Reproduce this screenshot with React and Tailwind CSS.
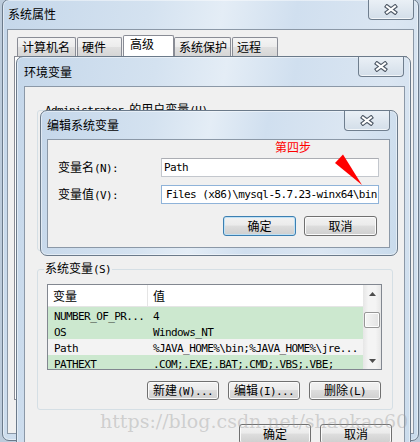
import React from 'react';

const mono = "font-['DejaVu_Sans_Mono',monospace] text-[11px] tracking-[-0.6px]";
const frameBg =
  'bg-[linear-gradient(100deg,#c5d7ea_0%,#d4e2f0_30%,#e4edf6_45%,#d0dfef_60%,#dbe6f2_80%,#c9dbec_100%)]';

function M({ children }) {
  return <span className={mono}>{children}</span>;
}

function CloseButton() {
  return (
    <div className="flex h-[20px] w-[46px] shrink-0 items-center justify-center rounded-b-[4px] border border-t-0 border-[#6f7e8e] bg-[linear-gradient(#eaf0f6,#d3dee9)] shadow-[inset_0_-1px_0_rgba(255,255,255,0.7)]">
      <svg width="14" height="11" viewBox="0 0 14 11">
        <path d="M3 2.5 L11 8.5 M11 2.5 L3 8.5" stroke="#4f5966" strokeWidth="4.2" strokeLinecap="square" />
        <path d="M3 2.5 L11 8.5 M11 2.5 L3 8.5" stroke="#ffffff" strokeWidth="2" strokeLinecap="square" />
      </svg>
    </div>
  );
}

function Win({ title, box, bar, titleTop, client, children }) {
  return (
    <div className={`absolute flex flex-col border border-[#6b7a8a] shadow-[inset_0_0_0_1px_rgba(255,255,255,0.45)] ${frameBg} ${box}`}>
      <div className={`flex shrink-0 items-start justify-between ${bar}`}>
        <span className={titleTop}>{title}</span>
        <CloseButton />
      </div>
      <div className={`shrink-0 border border-[#8b98a7] bg-[#f0f0f0] ${client}`}>{children}</div>
    </div>
  );
}

function Btn({ className = '', def, children }) {
  const edge = def
    ? 'border-[#3c7fb1] shadow-[inset_0_0_0_1px_#bfe1f5]'
    : 'border-[#707070] shadow-[inset_0_0_0_1px_#fbfbfb]';
  return (
    <div
      className={`flex shrink-0 items-center justify-center rounded-[3px] border bg-[linear-gradient(#f2f2f2_0%,#ebebeb_45%,#dddddd_50%,#cfcfcf_100%)] ${edge} ${className}`}
    >
      <span>{children}</span>
    </div>
  );
}

function Tab({ className = '', children }) {
  return (
    <div
      className={`h-[19px] rounded-t-[2px] border border-b-0 border-[#898c95] bg-[linear-gradient(#f4f4f4,#ececec_50%,#e0e0e0_50%,#d6d6d6)] pl-[4px] pt-[3px] ${className}`}
    >
      {children}
    </div>
  );
}

const rows = [
  { name: 'NUMBER_OF_PR...', value: '4' },
  { name: 'OS', value: 'Windows_NT' },
  { name: 'Path', value: '%JAVA_HOME%\\bin;%JAVA_HOME%\\jre...', sel: true },
  { name: 'PATHEXT', value: '.COM;.EXE;.BAT;.CMD;.VBS;.VBE;' },
];

function ListView() {
  return (
    <div className="ml-[3px] mt-[8px] flex h-[86px] w-[335px] border border-[#828790] bg-white">
      <div className="flex w-[315px] flex-col overflow-hidden">
        <div className="flex h-[22px] shrink-0 border-b border-[#e5e5e5] bg-white">
          <div className="flex w-[100px] items-center border-r border-[#e5e5e5] pl-[5px]">变量</div>
          <div className="flex items-center pl-[5px]">值</div>
        </div>
        {rows.map((r) => (
          <div
            key={r.name}
            className={`flex h-[16px] shrink-0 items-center whitespace-nowrap pt-[1px] ${r.sel ? 'bg-[#f3f3f3]' : 'bg-[#cce8cf]'}`}
          >
            <div className="w-[100px] pl-[6px]">
              <M>{r.name}</M>
            </div>
            <div className="pl-[5px]">
              <M>{r.value}</M>
            </div>
          </div>
        ))}
      </div>
      <div className="flex w-[18px] flex-col items-center bg-[linear-gradient(90deg,#e6e6e6,#f4f4f4_30%,#f4f4f4_70%,#e6e6e6)]">
        <div className="flex h-[17px] items-center justify-center">
          <svg width="7" height="4" viewBox="0 0 7 4">
            <path d="M0 4 L3.5 0 L7 4 Z" fill="#4d4d4d" />
          </svg>
        </div>
        <div className="mt-[10px] h-[16px] w-[16px] rounded-[2px] border border-[#979797] bg-[linear-gradient(90deg,#f5f5f5,#e3e3e3)] shadow-[inset_0_0_0_1px_#fdfdfd]" />
        <div className="flex-1" />
        <div className="flex h-[17px] items-center justify-center">
          <svg width="7" height="4" viewBox="0 0 7 4">
            <path d="M0 0 L7 0 L3.5 4 Z" fill="#4d4d4d" />
          </svg>
        </div>
      </div>
    </div>
  );
}

export default function App() {
  return (
    <div className="relative h-[442px] w-[420px] overflow-hidden bg-[#bccbdb] font-['Noto_Sans_CJK_SC',sans-serif] text-[12px] leading-[12px] text-black">
      {/* 系统属性 */}
      <Win
        title="系统属性"
        box="left-[2px] top-[-1px] h-[442px] w-[417px] rounded-[7px]"
        bar="h-[29px] pl-[5px] pr-[4px]"
        titleTop="mt-[8px]"
        client="ml-[4px] h-[405px] w-[407px]"
      >
        <div className="flex h-[26px] items-end pl-[9px] pt-[5px]">
          <Tab className="w-[59px]">计算机名</Tab>
          <Tab className="ml-[1px] w-[45px]">硬件</Tab>
          <div className="ml-[1px] h-[21px] w-[51px] rounded-t-[2px] border border-b-0 border-[#898c95] bg-white pl-[6px] pt-[2px]">
            高级
          </div>
          <Tab className="w-[57px]">系统保护</Tab>
          <Tab className="ml-[1px] w-[46px]">远程</Tab>
        </div>
        <div className="ml-[6px] h-[344px] w-[393px] border border-[#898c95] bg-white" />
      </Win>

      {/* 环境变量 */}
      <Win
        title="环境变量"
        box="left-[16px] top-[56px] h-[430px] w-[395px] rounded-t-[7px]"
        bar="h-[29px] pl-[7px] pr-[6px]"
        titleTop="mt-[9px]"
        client="ml-[7px] h-[395px] w-[381px]"
      >
        <div className="flex flex-col pt-[16px]">
          <fieldset className="ml-[12px] h-[148px] w-[356px] rounded-[3px] border border-[#d5dfe5] pl-[6px]">
            <legend className="px-[1px]">
              <M>Administrator </M>的用户变量<M>(U)</M>
            </legend>
          </fieldset>
          <fieldset className="ml-[12px] mt-[11px] h-[148px] w-[356px] rounded-[3px] border border-[#d5dfe5] pl-[6px]">
            <legend className="px-[1px]">
              系统变量<M>(S)</M>
            </legend>
            <ListView />
            <div className="mt-[11px] flex justify-end gap-[9px] pr-[11px]">
              <Btn className="h-[19px] w-[72px]">
                新建<M>(W)...</M>
              </Btn>
              <Btn className="h-[19px] w-[72px]">
                编辑<M>(I)...</M>
              </Btn>
              <Btn className="h-[19px] w-[72px]">
                删除<M>(L)</M>
              </Btn>
            </div>
          </fieldset>
          <div className="mt-[14px] flex justify-end gap-[9px] pr-[12px]">
            <Btn className="h-[20px] w-[72px]">确定</Btn>
            <Btn className="h-[20px] w-[72px]">取消</Btn>
          </div>
        </div>
      </Win>

      {/* 编辑系统变量 */}
      <Win
        title="编辑系统变量"
        box="left-[40px] top-[110px] h-[146px] w-[358px] rounded-[7px]"
        bar="h-[28px] pl-[6px] pr-[7px]"
        titleTop="mt-[8px]"
        client="ml-[6px] h-[109px] w-[343px]"
      >
        <div className="flex flex-col">
          <div className="flex h-[18px] items-start pl-[227px] pt-[1px] leading-[12px] text-[#ff0000]">第四步</div>
          <div className="flex h-[19px] items-center">
            <div className="w-[113px] pl-[10px]">
              变量名<M>(N):</M>
            </div>
            <div className="flex h-[19px] w-[218px] items-center border border-[#c3c7cd] border-t-[#abadb3] bg-white pl-[2px]">
              <M>Path</M>
            </div>
          </div>
          <div className="mt-[8px] flex h-[19px] items-center">
            <div className="w-[113px] pl-[10px]">
              变量值<M>(V):</M>
            </div>
            <div className="flex h-[19px] w-[218px] items-center overflow-hidden whitespace-nowrap border border-[#8fb3d9] bg-white pl-[4px]">
              <M>Files (x86)\mysql-5.7.23-winx64\bin</M>
            </div>
          </div>
          <div className="mt-[12px] flex justify-end gap-[8px] pr-[12px]">
            <Btn def className="h-[20px] w-[73px]">
              确定
            </Btn>
            <Btn className="h-[20px] w-[73px]">取消</Btn>
          </div>
        </div>
      </Win>

      {/* 红色箭头标注 */}
      <svg className="absolute left-[330px] top-[150px]" width="40" height="40" viewBox="0 0 40 40">
        <polygon points="5,13 13,4.5 32,35" fill="#ff0000" />
      </svg>

      {/* 水印 */}
      <div className="pointer-events-none absolute left-[100px] top-[412px] whitespace-nowrap font-['DejaVu_Serif',serif] text-[19px] leading-[19px] text-[#9a9a9a]/40">
        https://blog.csdn.net/shaokao60
      </div>
    </div>
  );
}
